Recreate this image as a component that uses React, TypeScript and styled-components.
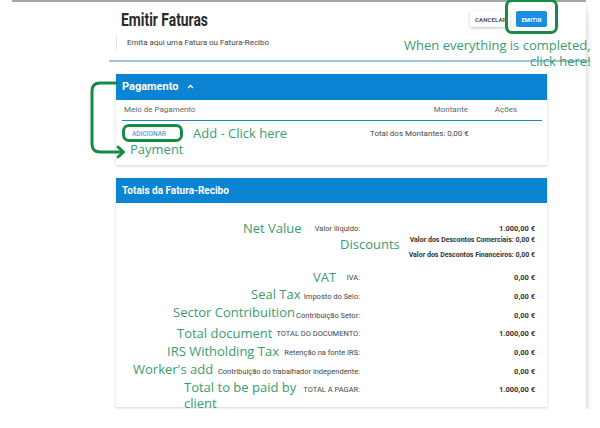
import React from 'react';
import styled, { createGlobalStyle } from 'styled-components';

const GlobalStyle = createGlobalStyle`
  html, body {
    margin: 0;
    padding: 0;
    background: #fff;
  }
  body {
    font-family: Roboto, "Liberation Sans", sans-serif;
    color: #333;
  }
  * {
    box-sizing: border-box;
  }
`

const Sheet = styled.div`
  position: relative;
  width: 586px;
  height: 409px;
  background: #fff;
  box-shadow: 0 9px 8px -2px rgba(0, 0, 0, .28), 0 3px 3px rgba(0, 0, 0, .12);
`

const TopRule = styled.div`
  height: 2px;
  margin-left: 12px;
  background: #a6a6a6;
`

const PageHeader = styled.div`
  display: flex;
  justify-content: space-between;
  align-items: flex-start;
  width: 431px;
  margin-left: 116px;
`

const TitleBlock = styled.div`
  padding-left: 5px;
`

const Title = styled.h1`
  margin: 6px 0 0;
  font-size: 18px;
  line-height: 24px;
  font-weight: 700;
  color: #2a2a2a;
  white-space: nowrap;
  transform: scaleX(0.77);
  transform-origin: left center;
`

const Subtitle = styled.p`
  margin: 3px 0 0 -5px;
  padding-left: 10px;
  height: 16px;
  line-height: 16px;
  font-size: 8px;
  color: #444;
  border-left: 1px solid #e6e6e6;
`

const Actions = styled.div`
  display: flex;
  gap: 6px;
  margin-top: 9px;
`

const Button = styled.button<{ $primary?: boolean }>`
  height: 16px;
  padding: 0 5px;
  border: none;
  border-radius: 2px;
  font-family: Roboto, "Liberation Sans", sans-serif;
  font-size: 6px;
  font-weight: 700;
  letter-spacing: .1px;
  color: ${p => p.$primary ? '#fff' : '#555'};
  background: ${p => p.$primary ? '#1b8de0' : '#fff'};
  box-shadow: ${p => p.$primary ? 'none' : '0 1px 3px rgba(0,0,0,.25)'};
  width: ${p => p.$primary ? '31px' : '40px'};
  text-align: ${p => p.$primary ? 'center' : 'left'};
`

const Divider = styled.div`
  height: 1.5px;
  width: 481px;
  margin: 9px 0 0 109px;
  background: #9cc5e3;
`

const Panels = styled.div`
  display: flex;
  flex-direction: column;
  gap: 13px;
  width: 431px;
  margin: 12px 0 0 116px;
`

const Panel = styled.section`
  background: #fff;
  box-shadow: 0 1px 3px rgba(0, 0, 0, .18);
`

const PanelHead = styled.div<{ $size: number; $h: number }>`
  display: flex;
  align-items: center;
  gap: 8px;
  height: ${p => p.$h}px;
  padding-left: 6px;
  background: #0b84d3;
  color: #fff;
  font-size: ${p => p.$size}px;
  font-weight: 700;
`

const PayBody = styled.div`
  padding: 0 5px 18px 6px;
`

const PayRow = styled.div<{ $head?: boolean }>`
  display: grid;
  grid-template-columns: 1fr 100px 74px;
  align-items: center;
  height: ${p => p.$head ? '21px' : '26px'};
  border-bottom: ${p => p.$head ? '1.5px solid #1a86c8' : 'none'};
  font-size: 8px;
  color: ${p => p.$head ? '#666' : '#444'};
`

const Cell = styled.div<{ $align?: string }>`
  padding-left: 2px;
  text-align: ${p => p.$align || 'left'};
  white-space: nowrap;
`

const AddLink = styled.span`
  margin-left: 8px;
  font-size: 6.5px;
  font-weight: 500;
  color: #5b9bd5;
`

const TotalsBody = styled.div`
  padding: 20px 12px 8px 0;
`

const TotalRow = styled.div<{ $h: number; $gap?: number }>`
  display: grid;
  grid-template-columns: 244px 175px;
  align-items: center;
  height: ${p => p.$h}px;
  margin-top: ${p => p.$gap || 0}px;
  font-size: 7.5px;
  white-space: nowrap;
`

const Label = styled.div`
  text-align: right;
  color: #444;
`

const Value = styled.div`
  text-align: right;
  font-weight: 700;
  color: #333;
`

const SubRow = styled.div<{ $gap?: number }>`
  height: 10px;
  line-height: 10px;
  margin-top: ${p => p.$gap || 0}px;
  text-align: right;
  font-size: 7px;
  font-weight: 700;
  color: #333;
`

const Note = styled.div<{ $x: number; $y: number; $right?: boolean }>`
  position: absolute;
  left: ${p => p.$x}px;
  top: ${p => p.$y - 7}px;
  font-family: "Open Sans", "DejaVu Sans", sans-serif;
  font-size: 13px;
  line-height: 15.5px;
  color: #3a9c70;
  white-space: pre;
  text-align: ${p => p.$right ? 'right' : 'left'};
`

const Ring = styled.div<{ $x: number; $y: number; $w: number; $h: number }>`
  position: absolute;
  left: ${p => p.$x}px;
  top: ${p => p.$y}px;
  width: ${p => p.$w}px;
  height: ${p => p.$h}px;
  border: 3px solid #178b45;
  border-radius: 7px;
`

const Arrow = styled.svg`
  position: absolute;
  left: 86px;
  top: 78px;
`

const notes = [
  { x: 404, y: 45, text: 'When everything is completed,\nclick here!', right: true },
  { x: 193, y: 133, text: 'Add - Click here' },
  { x: 130, y: 149, text: 'Payment' },
  { x: 243, y: 228, text: 'Net Value' },
  { x: 340, y: 244, text: 'Discounts' },
  { x: 313, y: 277, text: 'VAT' },
  { x: 251, y: 294, text: 'Seal Tax' },
  { x: 173, y: 312, text: 'Sector Contribuition' },
  { x: 177, y: 333, text: 'Total document' },
  { x: 167, y: 351, text: 'IRS Witholding Tax' },
  { x: 133, y: 369, text: "Worker's add" },
  { x: 184, y: 387, text: 'Total to be paid by\nclient' },
]

const taxes = [
  { label: 'IVA:', value: '0,00 €' },
  { label: 'Imposto do Selo:', value: '0,00 €' },
  { label: 'Contribuição Setor:', value: '0,00 €' },
  { label: 'TOTAL DO DOCUMENTO:', value: '1.000,00 €' },
  { label: 'Retenção na fonte IRS:', value: '0,00 €' },
  { label: 'Contribuição do trabalhador independente:', value: '0,00 €' },
  { label: 'TOTAL A PAGAR:', value: '1.000,00 €' },
]

const App = () => {
  return (
    <>
      <GlobalStyle />
      <Sheet>
        <TopRule />
        <PageHeader>
          <TitleBlock>
            <Title>Emitir Faturas</Title>
            <Subtitle>Emita aqui uma Fatura ou Fatura-Recibo</Subtitle>
          </TitleBlock>
          <Actions>
            <Button>CANCELAR</Button>
            <Button $primary>EMITIR</Button>
          </Actions>
        </PageHeader>
        <Divider />

        <Panels>
          <Panel>
            <PanelHead $size={11} $h={26}>
              Pagamento
              <svg width="7" height="5" viewBox="0 0 7 5">
                <path d="M1 4 L3.5 1.5 L6 4" stroke="#fff" strokeWidth="1.3" fill="none" />
              </svg>
            </PanelHead>
            <PayBody>
              <PayRow $head>
                <Cell>Meio de Pagamento</Cell>
                <Cell $align="right">Montante</Cell>
                <Cell $align="center">Ações</Cell>
              </PayRow>
              <PayRow>
                <Cell><AddLink>ADICIONAR</AddLink></Cell>
                <Cell $align="right">Total dos Montantes: 0,00 €</Cell>
                <Cell />
              </PayRow>
            </PayBody>
          </Panel>

          <Panel>
            <PanelHead $size={10} $h={25}>Totais da Fatura-Recibo</PanelHead>
            <TotalsBody>
              <TotalRow $h={12}>
                <Label>Valor ilíquido:</Label>
                <Value>1.000,00 €</Value>
              </TotalRow>
              <SubRow>Valor dos Descontos Comerciais: 0,00 €</SubRow>
              <SubRow $gap={5}>Valor dos Descontos Financeiros: 0,00 €</SubRow>
              {taxes.map((t, i) => (
                <TotalRow key={t.label} $h={18.7} $gap={i === 0 ? 9 : 0}>
                  <Label>{t.label}</Label>
                  <Value>{t.value}</Value>
                </TotalRow>
              ))}
            </TotalsBody>
          </Panel>
        </Panels>

        {/* annotations drawn over the screenshot */}
        <Ring $x={505} $y={-1} $w={53} $h={35} />
        <Ring $x={122} $y={124} $w={61} $h={18} />
        <Arrow width="44" height="82" viewBox="0 0 44 82">
          <path d="M31 5 H14 Q6 5 6 13 V66 Q6 74 14 74 H36" stroke="#178b45" strokeWidth="3" fill="none" strokeLinecap="round" />
          <path d="M32 69 L37.5 74 L32 79" stroke="#178b45" strokeWidth="3" fill="none" strokeLinecap="round" strokeLinejoin="round" />
        </Arrow>
        {notes.map(n => (
          <Note key={n.text} $x={n.x} $y={n.y} $right={n.right}>{n.text}</Note>
        ))}
      </Sheet>
    </>
  );
}

export default App;
